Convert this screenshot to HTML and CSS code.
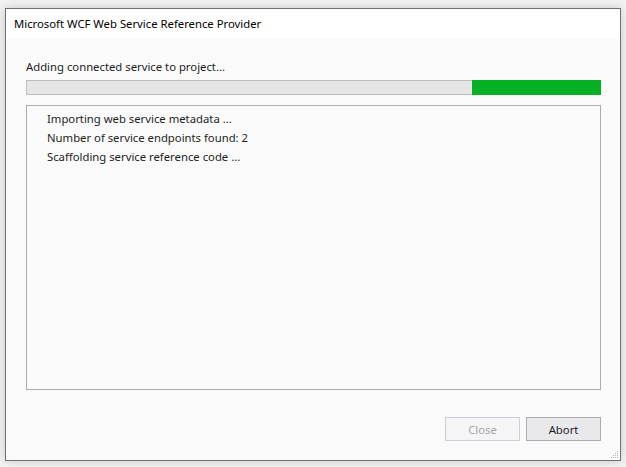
FILE: index.html
```html
<!DOCTYPE html>
<html>
<head>
<meta charset="utf-8">
<link rel="stylesheet" href="styles.css">
</head>
<body>
<div class="window">
  <div class="titlebar">Microsoft WCF Web Service Reference Provider</div>
  <div class="content">
    <div class="status">Adding connected service to project...</div>
    <div class="progress"><div class="bar" style="width:22.5%"></div></div>
    <div class="log">
      <div class="line">Importing web service metadata ...</div>
      <div class="line">Number of service endpoints found: 2</div>
      <div class="line">Scaffolding service reference code ...</div>
    </div>
    <div class="buttons">
      <button class="btn disabled">Close</button>
      <button class="btn">Abort</button>
    </div>
  </div>
  <svg class="grip" width="9" height="9" viewBox="0 0 9 9">
    <g fill="#b4b4b4">
      <rect x="7" y="1" width="1" height="1"/>
      <rect x="5" y="3" width="1" height="1"/><rect x="7" y="3" width="1" height="1"/>
      <rect x="3" y="5" width="1" height="1"/><rect x="5" y="5" width="1" height="1"/><rect x="7" y="5" width="1" height="1"/>
      <rect x="1" y="7" width="1" height="1"/><rect x="3" y="7" width="1" height="1"/><rect x="5" y="7" width="1" height="1"/><rect x="7" y="7" width="1" height="1"/>
    </g>
  </svg>
</div>
</body>
</html>
```
FILE: styles.css
```css
html, body {
  margin: 0;
  padding: 0;
  background: #f3f3f3;
  width: 626px;
  height: 467px;
  overflow: hidden;
}
body {
  padding: 8px 0 0 5px;
  box-sizing: border-box;
  font-family: "Noto Sans", "Open Sans", sans-serif;
  font-size: 11.3px;
  color: #1e1e1e;
}
.window {
  position: relative;
  width: 616px;
  height: 453px;
  box-sizing: border-box;
  border: 1px solid #707070;
  background: #fafafa;
  box-shadow: 0 0 10px rgba(0,0,0,0.18);
  display: flex;
  flex-direction: column;
}
.titlebar {
  height: 30px;
  background: #ffffff;
  padding-left: 8px;
  line-height: 30px;
  font-size: 11.3px;
  color: #000;
}
.content {
  flex: 1;
  display: flex;
  flex-direction: column;
  padding: 20px 19px 0 20px;
}
.status {
  height: 16px;
  line-height: 16px;
  color: #1e1e1e;
}
.progress {
  margin-top: 5px;
  height: 15px;
  box-sizing: border-box;
  border: 1px solid #bcbcbc;
  background: #e6e6e6;
  display: flex;
  justify-content: flex-end;
}
.bar {
  background: #06b025;
  margin: -1px -1px -1px 0;
}
.log {
  margin-top: 10px;
  height: 285px;
  box-sizing: border-box;
  border: 1px solid #acacac;
  background: #fafafa;
  padding: 3px 0 0 20px;
}
.line {
  height: 19px;
  line-height: 19px;
}
.buttons {
  margin-top: 27px;
  display: flex;
  justify-content: flex-end;
  gap: 6px;
}
.btn {
  width: 75px;
  height: 24px;
  box-sizing: border-box;
  border: 1px solid #acacac;
  background: #e9e9ec;
  font-family: inherit;
  font-size: 11.3px;
  color: #1e1e1e;
  padding: 0;
}
.btn.disabled {
  border-color: #cccedb;
  background: #f5f5f5;
  color: #a2a4a5;
}
.grip {
  position: absolute;
  right: 1px;
  bottom: 1px;
}
```
